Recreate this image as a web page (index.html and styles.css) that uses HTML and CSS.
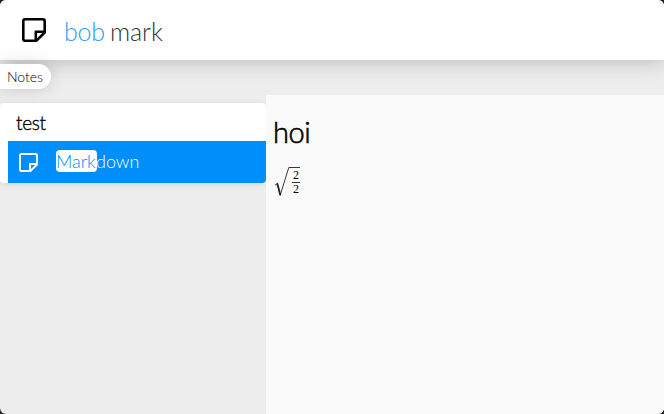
FILE: index.html
```html
<!DOCTYPE html>
<html lang="en">
<head>
<meta charset="utf-8">
<title>Notes</title>
<link rel="stylesheet" href="styles.css">
</head>
<body>
<div class="window">
  <header class="search">
    <svg class="search-icon" viewBox="0 0 24 24"><path d="M3 1.3h18q1.7 0 1.7 1.7v11.5l-8.2 8.2H3q-1.7 0-1.7-1.7V3q0-1.7 1.7-1.7Z"/><path d="M22.7 13.8h-8.9v8.9"/></svg>
    <div class="query"><span class="prefix">bob</span> mark</div>
  </header>
  <div class="tags"><span class="tag">Notes</span></div>
  <main class="content">
    <aside class="results">
      <section class="card">
        <h2 class="card-title">test</h2>
        <div class="item">
          <svg class="item-icon" viewBox="0 0 24 24"><path d="M3 1.3h18q1.7 0 1.7 1.7v11.5l-8.2 8.2H3q-1.7 0-1.7-1.7V3q0-1.7 1.7-1.7Z"/><path d="M22.7 13.8h-8.9v8.9"/></svg>
          <div class="item-name"><mark>Mark</mark>down</div>
        </div>
      </section>
    </aside>
    <article class="preview">
      <h1 class="preview-title">hoi</h1>
      <div class="formula">
        <svg class="radical" viewBox="0 0 27 32"><path class="hair" d="M1 19.2l3-2.3M6 29.8L14.8 1.5H26"/><path class="thick" d="M3.3 17.5L6.3 29"/></svg>
        <span class="fraction"><span>2</span><span class="denominator">2</span></span>
      </div>
    </article>
  </main>
</div>
</body>
</html>
```
FILE: styles.css
```css
* { box-sizing: border-box; }
html { background: #20201c; }
body { margin: 0; font-family: Lato, sans-serif; color: #000; }
.window {
  display: flex;
  flex-direction: column;
  height: 414px;
  overflow: hidden;
  border-radius: 6px;
  background: #ededed;
}
.search {
  display: flex;
  align-items: center;
  flex: 0 0 60px;
  padding-left: 22px;
  background: #fff;
  box-shadow: 0 2px 20px rgba(0, 0, 0, .22);
}
.search-icon { width: 24px; height: 24px; }
.search-icon path, .item-icon path {
  fill: none;
  stroke: currentColor;
  stroke-width: 2.4;
  stroke-linejoin: round;
}
.search-icon path { stroke-width: 2.6; }
.query {
  margin: 1px 0 0 18px;
  font-size: 25px;
  font-weight: 300;
  word-spacing: -1.5px;
  line-height: 32px;
  white-space: pre;
  color: #333;
}
.prefix { color: #2a9dfa; letter-spacing: -.3px; }
.tags { flex: 0 0 35px; padding-top: 4px; display: flex; align-items: flex-start; }
.tag {
  width: 51px;
  height: 25px;
  padding-left: 7px;
  border-radius: 0 12.5px 12.5px 0;
  background: #fff;
  box-shadow: 0 0 16px rgba(0, 0, 0, .16);
  font-size: 14px;
  font-weight: 300;
  line-height: 26px;
  position: relative;
}
.content { display: flex; flex: 1; }
.results { width: 266px; padding-top: 8px; }
.card {
  overflow: hidden;
  height: 80px;
  padding-left: 8px;
  border-radius: 4px;
  background: #fff;
  box-shadow: 0 1px 6px rgba(0, 0, 0, .1);
}
.card-title {
  height: 38px;
  margin: 0;
  padding-left: 8px;
  font-size: 19px;
  font-weight: 300;
  letter-spacing: -.3px;
  line-height: 39px;
  -webkit-text-stroke: .35px currentColor;
}
.item {
  display: flex;
  align-items: center;
  height: 42px;
  padding-left: 11px;
  background: #008efa;
  color: #fff;
}
.item-icon { width: 19px; height: 19px; }
.item-name {
  margin: -2px 0 0 18px;
  font-size: 18px;
  font-weight: 300;
  line-height: 22px;
}
mark {
  display: inline-block;
  width: 41px;
  margin-right: -1px;
  border-radius: 4px;
  background: #fff;
  color: #008efa;
}
.preview { flex: 1; padding: 20px 8px 0 7px; background: #fafafa; }
.preview-title {
  margin: 0;
  font-size: 29px;
  font-weight: 300;
  letter-spacing: -.5px;
  line-height: 34px;
  -webkit-text-stroke: .6px currentColor;
}
.formula { display: flex; margin: 17px 0 0 1px; }
.radical { width: 27px; height: 32px; }
.radical path { fill: none; stroke: #222; }
.radical .hair { stroke-width: .9; }
.radical .thick { stroke-width: 1.8; }
.fraction {
  display: grid;
  width: 8px;
  height: 27px;
  margin: 3px 0 0 -9px;
  grid-template-rows: 13px 14px;
  text-align: center;
  font: 12px/12px "Liberation Serif", serif;
}
.denominator { border-top: 1px solid #333; }
```
